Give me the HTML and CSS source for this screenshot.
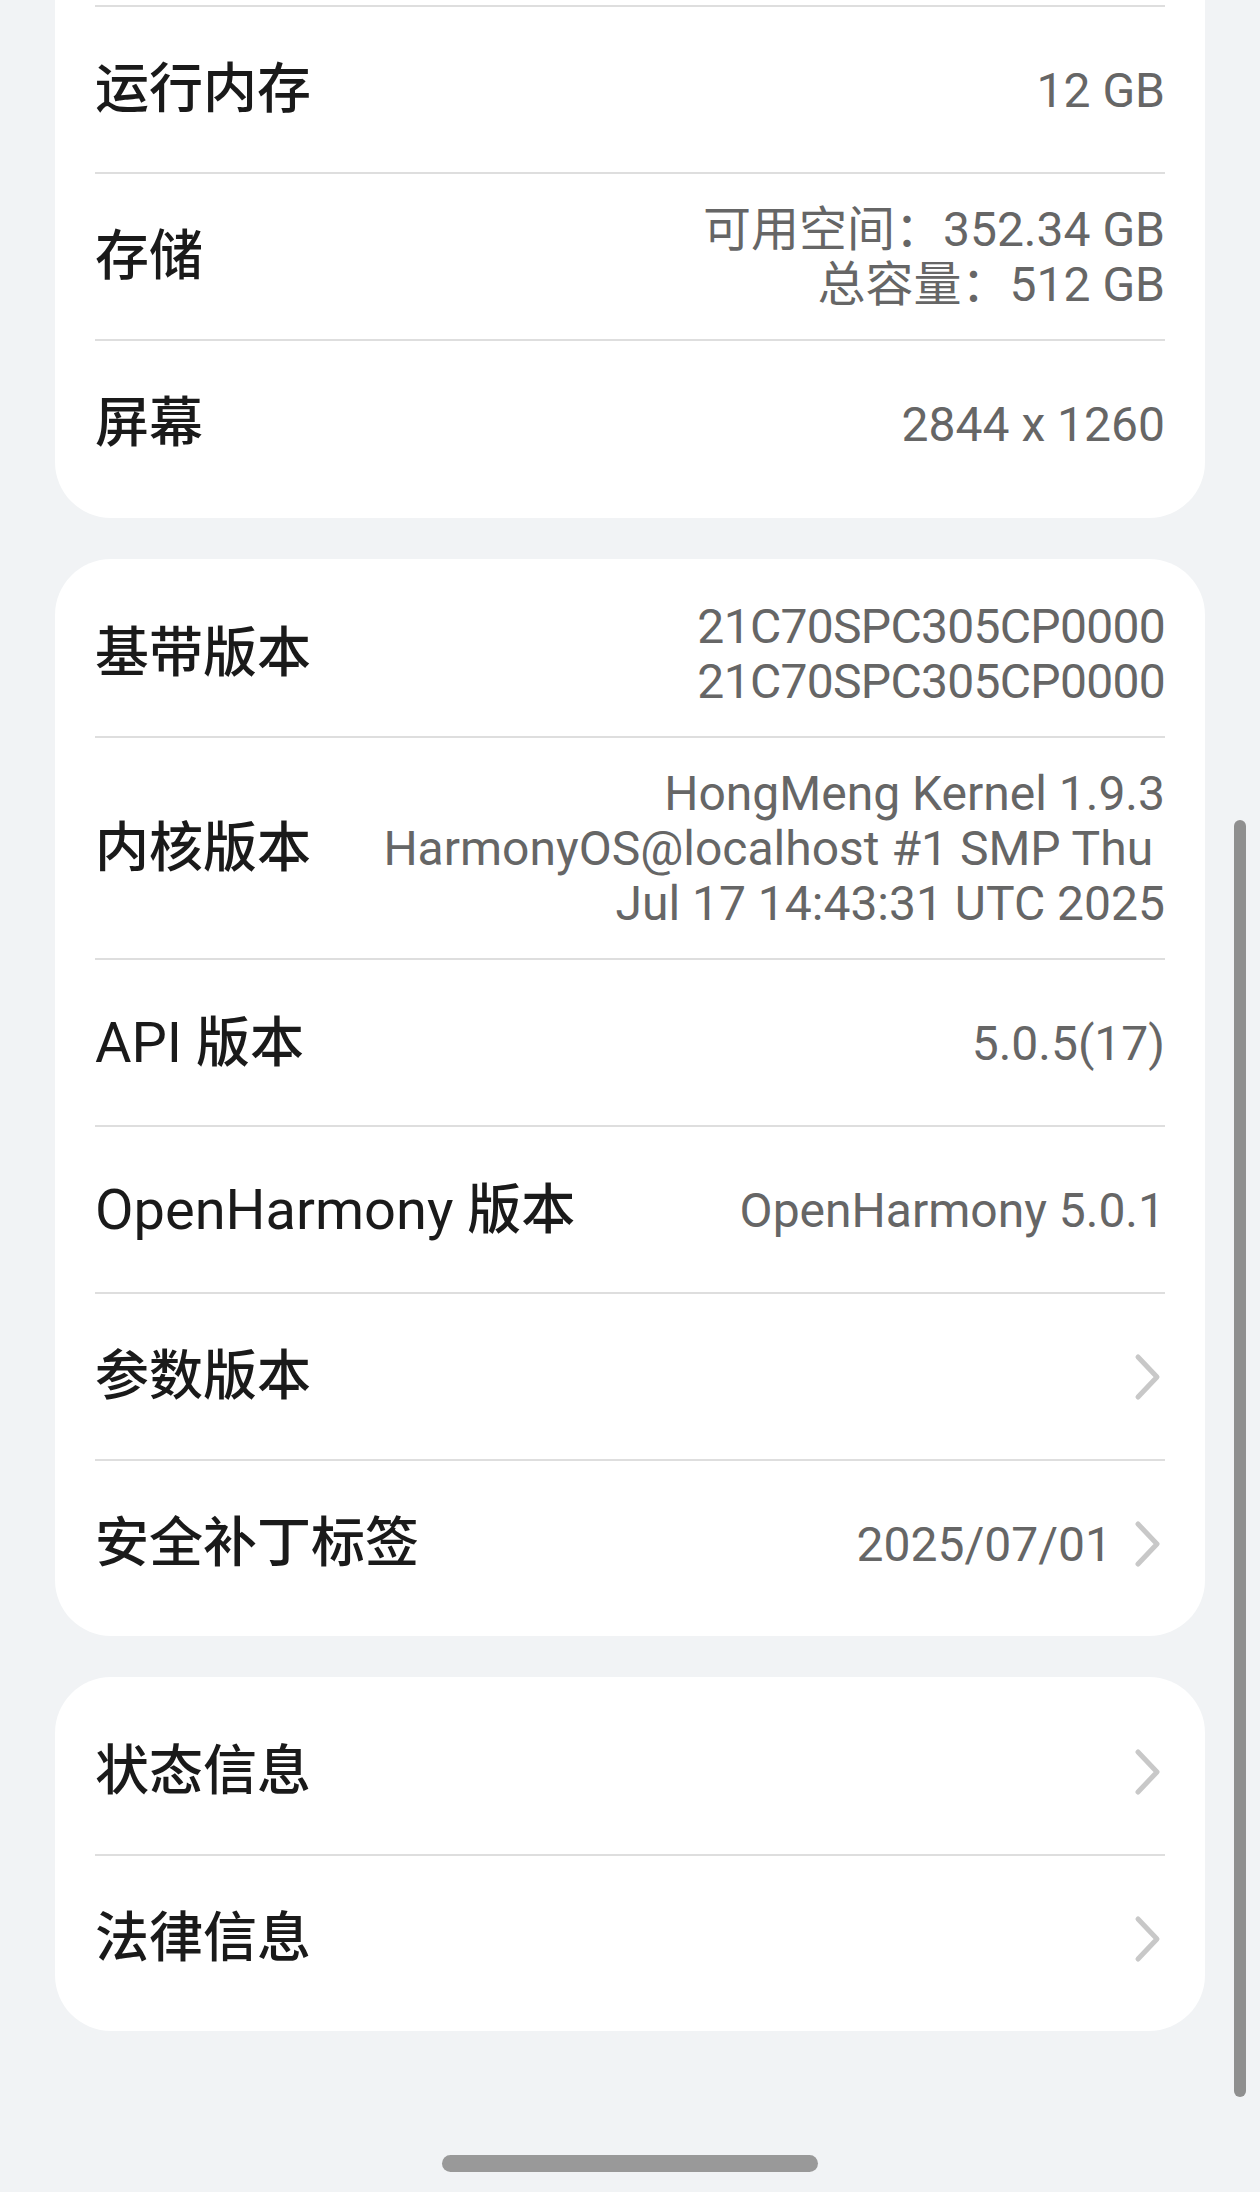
FILE: index.html
```html
<!DOCTYPE html>
<html lang="zh-CN">
<head>
<meta charset="utf-8">
<title>关于本机</title>
<link rel="stylesheet" href="styles.css">
</head>
<body>
<div class="page">
  <section class="card card-top">
    <div class="row">
      <div class="label">运行内存</div>
      <div class="value">12 GB</div>
    </div>
    <div class="row">
      <div class="label">存储</div>
      <div class="value">可用空间：352.34 GB<br>总容量：512 GB</div>
    </div>
    <div class="row">
      <div class="label">屏幕</div>
      <div class="value">2844 x 1260</div>
    </div>
  </section>

  <section class="card">
    <div class="row first">
      <div class="label">基带版本</div>
      <div class="value code">21C70SPC305CP0000<br>21C70SPC305CP0000</div>
    </div>
    <div class="row">
      <div class="label">内核版本</div>
      <div class="value">HongMeng Kernel 1.9.3<br>HarmonyOS@localhost #1 SMP Thu&nbsp;<br>Jul 17 14:43:31 UTC 2025</div>
    </div>
    <div class="row">
      <div class="label"><span class="en">API </span>版本</div>
      <div class="value">5.0.5(17)</div>
    </div>
    <div class="row">
      <div class="label"><span class="en">OpenHarmony </span>版本</div>
      <div class="value">OpenHarmony 5.0.1</div>
    </div>
    <div class="row">
      <div class="label">参数版本</div>
      <div class="trail">
        <svg class="chev" viewBox="0 0 28 48" width="28" height="48"><path d="M4 4 L23 24 L4 44"/></svg>
      </div>
    </div>
    <div class="row">
      <div class="label">安全补丁标签</div>
      <div class="trail">
        <span class="value">2025/07/01</span>
        <svg class="chev" viewBox="0 0 28 48" width="28" height="48"><path d="M4 4 L23 24 L4 44"/></svg>
      </div>
    </div>
  </section>

  <section class="card">
    <div class="row first">
      <div class="label">状态信息</div>
      <div class="trail">
        <svg class="chev" viewBox="0 0 28 48" width="28" height="48"><path d="M4 4 L23 24 L4 44"/></svg>
      </div>
    </div>
    <div class="row">
      <div class="label">法律信息</div>
      <div class="trail">
        <svg class="chev" viewBox="0 0 28 48" width="28" height="48"><path d="M4 4 L23 24 L4 44"/></svg>
      </div>
    </div>
  </section>
</div>
<div class="scrollbar"></div>
<div class="home-indicator"></div>
</body>
</html>
```

FILE: styles.css
```css
html, body {
  margin: 0;
  padding: 0;
}

body {
  width: 1260px;
  height: 2192px;
  overflow: hidden;
  background: #f1f3f5;
  font-family: Roboto, "Noto Sans CJK SC", sans-serif;
  position: relative;
}

.page {
  padding: 0 55px;
  display: flex;
  flex-direction: column;
  gap: 41px;
}

.card {
  background: #ffffff;
  border-radius: 56px;
  padding: 12px 40px 10px;
}

.card-top {
  border-radius: 0 0 56px 56px;
  padding-top: 5px;
  padding-bottom: 12px;
}

.row {
  display: flex;
  align-items: center;
  justify-content: space-between;
  padding: 28px 0 27px;
  min-height: 110px;
  border-top: 2px solid #dedede;
}

.row.first {
  border-top: none;
}

.label {
  font-size: 54px;
  font-weight: 500;
  color: #1a1a1a;
  line-height: 64px;
  white-space: nowrap;
}

.label .en {
  font-size: 56px;
  font-weight: 400;
}

.value {
  font-size: 48px;
  color: #666666;
  line-height: 55px;
  text-align: right;
  white-space: nowrap;
}

.value.code {
  letter-spacing: -0.7px;
}

.trail {
  display: flex;
  align-items: center;
  gap: 22px;
}

.chev {
  display: block;
  margin-right: 3px;
}

.chev path {
  fill: none;
  stroke: #c8c8c8;
  stroke-width: 5;
  stroke-linecap: round;
  stroke-linejoin: round;
}

.scrollbar {
  position: absolute;
  left: 1234px;
  top: 820px;
  width: 12px;
  height: 1277px;
  border-radius: 6px;
  background: #8f8f8f;
}

.home-indicator {
  position: absolute;
  left: 442px;
  top: 2155px;
  width: 376px;
  height: 17px;
  border-radius: 9px;
  background: #999999;
}
```
